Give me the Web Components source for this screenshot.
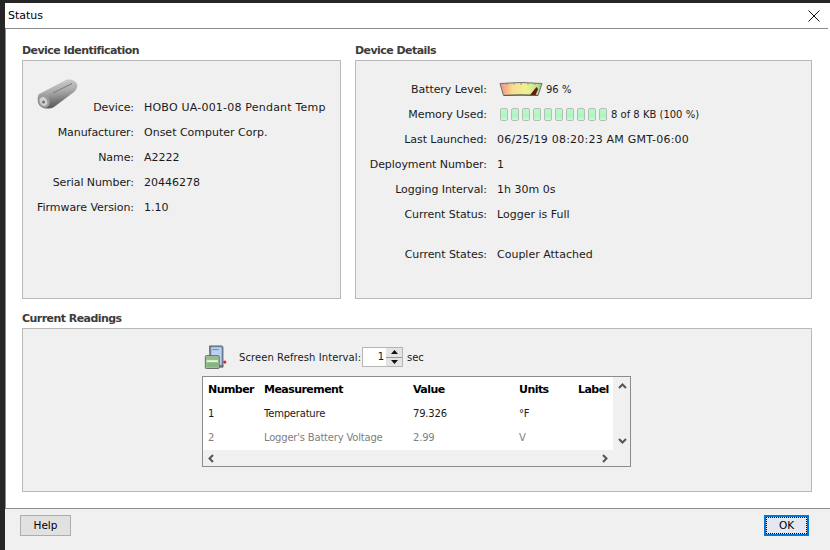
<!DOCTYPE html>
<html>
<head>
<meta charset="utf-8">
<title>Status</title>
<style>
  html, body { margin: 0; height: 100%; background: #262626; }
  body { font: 11px "DejaVu Sans", sans-serif; color: #1a1a1a; overflow: hidden; }
</style>
</head>
<body>
<status-dialog>
  <group-box slot="ident" heading="Device Identification">
    <field-grid style="--label-w:97px; --pad:19px 14px; --first-row:15px">
      <device-icon></device-icon>
      <field-row first wide label="Device:">HOBO UA-001-08 Pendant Temp</field-row>
      <field-row label="Manufacturer:">Onset Computer Corp.</field-row>
      <field-row label="Name:">A2222</field-row>
      <field-row label="Serial Number:">20446278</field-row>
      <field-row label="Firmware Version:">1.10</field-row>
    </field-grid>
  </group-box>
  <group-box slot="details" heading="Device Details">
    <field-grid style="--label-w:117px; --pad:16px 14px; --first-row:25px">
      <field-row small label="Battery Level:"><battery-gauge></battery-gauge> 96 %</field-row>
      <field-row small label="Memory Used:"><memory-bar></memory-bar> 8 of 8 KB (100 %)</field-row>
      <field-row wide label="Last Launched:">06/25/19 08:20:23 AM GMT-06:00</field-row>
      <field-row label="Deployment Number:">1</field-row>
      <field-row label="Logging Interval:">1h 30m 0s</field-row>
      <field-row label="Current Status:">Logger is Full</field-row>
      <field-row spaced label="Current States:">Coupler Attached</field-row>
    </field-grid>
  </group-box>
  <group-box slot="readings" heading="Current Readings">
    <readings-view></readings-view>
  </group-box>
  <dialog-button slot="help">Help</dialog-button>
  <dialog-button slot="ok" focused>OK</dialog-button>
</status-dialog>

<script>
function shadow(el, html) {
  el.attachShadow({ mode: 'open' }).innerHTML = html;
}

class StatusDialog extends HTMLElement {
  constructor() {
    super();
    shadow(this, `
      <style>
        :host { display: flex; flex-direction: column; height: 547px; margin: 3px 0 0 5px; background: #fff; }
        .title { display: flex; align-items: center; justify-content: space-between; height: 25px; padding: 0 8px 0 3px; margin-right: 2px; border-bottom: 1px solid #8c8c8c; color: #000; }
        .title svg { display: block; }
        .body { flex: 1; display: grid; grid-template-columns: 319px 457px; grid-template-rows: 268px 184px; column-gap: 14px; padding: 11px 0 0 16px; margin-right: 2px; border-left: 1px solid #8c8c8c; box-sizing: border-box; align-content: start; }
        ::slotted([slot=readings]) { grid-column: 1 / 3; }
        .foot { display: flex; justify-content: space-between; align-items: flex-start; height: 42px; box-sizing: border-box; padding: 6px 21px 0 15px; background: #f0f0f0; border-top: 1px solid #8c8c8c; }
      </style>
      <div class="title">
        <span>Status</span>
        <svg width="12" height="12" viewBox="0 0 12 12"><path d="M.5.5l11 11M11.5.5l-11 11" stroke="#111" fill="none"/></svg>
      </div>
      <div class="body">
        <slot name="ident"></slot>
        <slot name="details"></slot>
        <slot name="readings"></slot>
      </div>
      <div class="foot">
        <slot name="help"></slot>
        <slot name="ok"></slot>
      </div>`);
  }
}

class GroupBox extends HTMLElement {
  constructor() {
    super();
    shadow(this, `
      <style>
        :host { display: flex; flex-direction: column; min-width: 0; }
        h2 { margin: 0; height: 19px; padding-top: 1px; line-height: 20px; font-size: 11px; letter-spacing: -.55px; font-weight: 700; color: #3c3c3c; }
        .box { height: 239px; box-sizing: border-box; border: 1px solid #b9b9b9; background: #f0f0f0; }
        :host([heading="Current Readings"]) .box { height: 164px; }
      </style>
      <h2></h2>
      <div class="box"><slot></slot></div>`);
    this.shadowRoot.querySelector('h2').textContent = this.getAttribute('heading');
  }
}

class FieldGrid extends HTMLElement {
  constructor() {
    super();
    shadow(this, `
      <style>
        :host { display: grid; grid-template-columns: var(--label-w) 1fr; column-gap: 10px; grid-template-rows: var(--first-row); grid-auto-rows: 25px; padding: var(--pad); white-space: nowrap; }
      </style>
      <slot></slot>`);
  }
}

class FieldRow extends HTMLElement {
  constructor() {
    super();
    shadow(this, `
      <style>
        :host { display: contents; }
        .label, .value { display: flex; align-items: center; }
        .label { justify-content: flex-end; grid-column: 1; letter-spacing: -.07px; }
        .value { grid-column: 2; gap: 3px; }
        :host([first]) .label, :host([first]) .value { grid-row: 2; }
        :host([spaced]) .label, :host([spaced]) .value { margin-top: 15px; height: 25px; }
        :host([wide]) .value { letter-spacing: .21px; }
        :host([small]) .value { font-size: 10px; }
      </style>
      <span class="label"></span>
      <span class="value"><slot></slot></span>`);
    this.shadowRoot.querySelector('.label').textContent = this.getAttribute('label');
  }
}

class DeviceIcon extends HTMLElement {
  constructor() {
    super();
    shadow(this, `
      <style>:host { display: block; grid-column: 1; grid-row: 1 / 3; height: 30px; margin-top: -1px; }
      svg { display: block; }</style>
      <svg width="41" height="30" viewBox="0 0 41 30">
        <defs>
          <linearGradient id="b" x1=".45" y1="0" x2=".62" y2="1">
            <stop offset="0" stop-color="#cfcfcf"/><stop offset=".4" stop-color="#ababab"/><stop offset=".8" stop-color="#6c6c6c"/><stop offset="1" stop-color="#555"/>
          </linearGradient>
        </defs>
        <path d="M2 15 L29 1 C33-.5 39 1.500 40 5 C41 8 39 11 37 13 L17 28 C13 30.500 6 30 3 27 C0 24 0 18 2 15Z" fill="url(#b)"/>
        <ellipse cx="7" cy="22.500" rx="5.500" ry="6.500" fill="#9c9c9c" transform="rotate(-25 7 22.500)"/>
        <ellipse cx="6.500" cy="22.500" rx="3.500" ry="4.500" fill="#d2d2d2" transform="rotate(-25 6.500 22.500)"/>
        <circle cx="6.500" cy="23" r="1.600" fill="#767676"/>
        <path d="M16 14 L35 4.500" stroke="#777" fill="none"/>
      </svg>`);
  }
}

class BatteryGauge extends HTMLElement {
  constructor() {
    super();
    shadow(this, `
      <style>:host { display: block; width: 44px; height: 15px; margin-left: 2px; } svg { display: block; }</style>
      <svg width="44" height="15" viewBox="0 0 44 15">
        <defs>
          <linearGradient id="g" x1="0" x2="1" y1="0" y2="0">
            <stop offset="0" stop-color="#f58c82"/><stop offset=".3" stop-color="#f7dc92"/><stop offset=".62" stop-color="#eef28e"/><stop offset=".85" stop-color="#c9e58e"/><stop offset="1" stop-color="#8fc98a"/>
          </linearGradient>
        </defs>
        <path d="M1 1.500 Q22 -.5 43 1.500 L39 13.500 Q22 12.600 4.500 13.500Z" fill="url(#g)" stroke="#6e6e6e"/>
        <path d="M8 1v2M15 .8v2M22 .6v2.400M29 .8v2M36 1v2" stroke="#8a8a8a" fill="none"/>
        <path d="M31 13 L37.500 5 L39 7 L36.600 13Z" fill="#6b1410"/>
        <path d="M5 13.400 Q22 12.500 39 13.400" stroke="#555" fill="none"/>
      </svg>`);
  }
}

class MemoryBar extends HTMLElement {
  constructor() {
    super();
    let cells = '';
    for (let i = 0; i < 10; i++) cells += '<i></i>';
    shadow(this, `
      <style>
        :host { display: flex; gap: 3px; margin: 0 1px 0 3px; }
        i { display: block; width: 6px; height: 11px; border: 1px solid #b0c0b4; border-radius: 2px; background: linear-gradient(#bdf7cc, #aef5c0 70%, #d0f9dc); }
      </style>${cells}`);
  }
}

class SpinBox extends HTMLElement {
  constructor() {
    super();
    shadow(this, `
      <style>
        :host { display: flex; width: 41px; height: 20px; box-sizing: border-box; border: 1px solid #b5b5b5; background: #fff; }
        .v { flex: 1; text-align: right; line-height: 18px; padding-right: 2px; }
        .btns { width: 16px; display: flex; flex-direction: column; background: #e4e4e4; }
        .btns b { flex: 1; display: flex; align-items: center; justify-content: center; }
        .btns b + b { border-top: 1px solid #9a9a9a; }
        svg { display: block; }
      </style>
      <span class="v">1</span>
      <span class="btns">
        <b><svg width="7" height="4"><path d="M3.500 0L7 4H0Z" fill="#111"/></svg></b>
        <b><svg width="7" height="4"><path d="M0 0H7L3.500 4Z" fill="#111"/></svg></b>
      </span>`);
  }
}

class ReadingsView extends HTMLElement {
  constructor() {
    super();
    shadow(this, `
      <style>
        :host { display: flex; flex-direction: column; padding: 14px 0 0 179px; font-size: 10px; }
        .bar { display: flex; align-items: center; height: 28px; padding-bottom: 5px; margin-left: 2px; white-space: nowrap; }
        .bar svg { display: block; margin-right: 11px; }
        .bar .txt { width: 119px; letter-spacing: .08px; }
        .bar spin-box { margin: 0 4px; }
        .table { width: 429px; height: 91px; box-sizing: border-box; border: 1px solid #8c8c8c; display: grid; grid-template-columns: 1fr 17px; grid-template-rows: 1fr 16px; background: #f0f0f0; }
        .rows { background: #fff; display: grid; grid-template-columns: 56px 149px 106px 59px 1fr; grid-template-rows: 24px 24px 24px; padding-left: 5px; white-space: nowrap; letter-spacing: -.2px; }
        .rows span { display: flex; align-items: center; }
        .rows .h { font-weight: 700; font-size: 11px; color: #000; letter-spacing: -.55px; }
        .off { color: #808080; }
        .vs, .hs { display: flex; justify-content: space-between; }
        .vs { flex-direction: column; padding: 6px 0 6px 5px; }
        .hs { grid-column: 1; padding: 0 5px 0 5px; align-items: center; }
        .vs svg, .hs svg { display: block; }
      </style>
      <div class="bar">
        <svg width="24" height="24" viewBox="0 0 24 26">
          <path d="M5 1h13a1.500 1.500 0 0 1 1.500 1.500V23h-14z" fill="#7e8ea6" stroke="#5b6470"/>
          <rect x="7" y="2.500" width="11" height="19" fill="#b9d2f2"/>
          <path d="M8 5h7" stroke="#6b7fa0"/>
          <circle cx="21.500" cy="18.500" r="1.800" fill="#d92a20"/>
          <path d="M19.500 22v2h-6" stroke="#555" fill="none"/>
          <rect x=".5" y="11.500" width="15" height="14" rx="1" fill="#9fc79a" stroke="#666"/>
          <path d="M2 17.500h12" stroke="#f2f5c9" stroke-width="2"/>
          <rect x="2" y="13" width="12" height="3" fill="#8fbd8c"/>
          <rect x="2" y="19" width="12" height="5" fill="#85b585"/>
        </svg>
        <span class="txt">Screen Refresh Interval:</span>
        <spin-box></spin-box>
        <span>sec</span>
      </div>
      <div class="table">
        <div class="rows">
          <span class="h">Number</span><span class="h">Measurement</span><span class="h">Value</span><span class="h">Units</span><span class="h">Label</span>
          <span>1</span><span>Temperature</span><span>79.326</span><span>°F</span><span></span>
          <span class="off">2</span><span class="off">Logger's Battery Voltage</span><span class="off">2.99</span><span class="off">V</span><span></span>
        </div>
        <div class="vs">
          <svg width="9" height="6"><path d="M1 5l3.500-3.500L8 5" stroke="#555" stroke-width="2" fill="none"/></svg>
          <svg width="9" height="6"><path d="M1 1l3.500 3.500L8 1" stroke="#555" stroke-width="2" fill="none"/></svg>
        </div>
        <div class="hs">
          <svg width="6" height="9"><path d="M5 1L1.500 4.500L5 8" stroke="#555" stroke-width="2" fill="none"/></svg>
          <svg width="6" height="9"><path d="M1 1l3.500 3.500L1 8" stroke="#555" stroke-width="2" fill="none"/></svg>
        </div>
      </div>`);
  }
}

class DialogButton extends HTMLElement {
  constructor() {
    super();
    shadow(this, `
      <style>
        :host { display: block; width: 51px; height: 21px; box-sizing: border-box; border: 1px solid #adadad; background: #e1e1e1; text-align: center; line-height: 19px; font-size: 10.5px; color: #000; }
        :host([focused]) { width: 45px; border: 2px solid #0078d7; background: #e5e8f1; line-height: 15px; }
        :host([focused]) span { display: block; height: 17px; box-sizing: border-box; border: 1px dotted #000; }
      </style>
      <span><slot></slot></span>`);
  }
}

customElements.define('status-dialog', StatusDialog);
customElements.define('group-box', GroupBox);
customElements.define('field-grid', FieldGrid);
customElements.define('field-row', FieldRow);
customElements.define('device-icon', DeviceIcon);
customElements.define('battery-gauge', BatteryGauge);
customElements.define('memory-bar', MemoryBar);
customElements.define('spin-box', SpinBox);
customElements.define('readings-view', ReadingsView);
customElements.define('dialog-button', DialogButton);
</script>
</body>
</html>
